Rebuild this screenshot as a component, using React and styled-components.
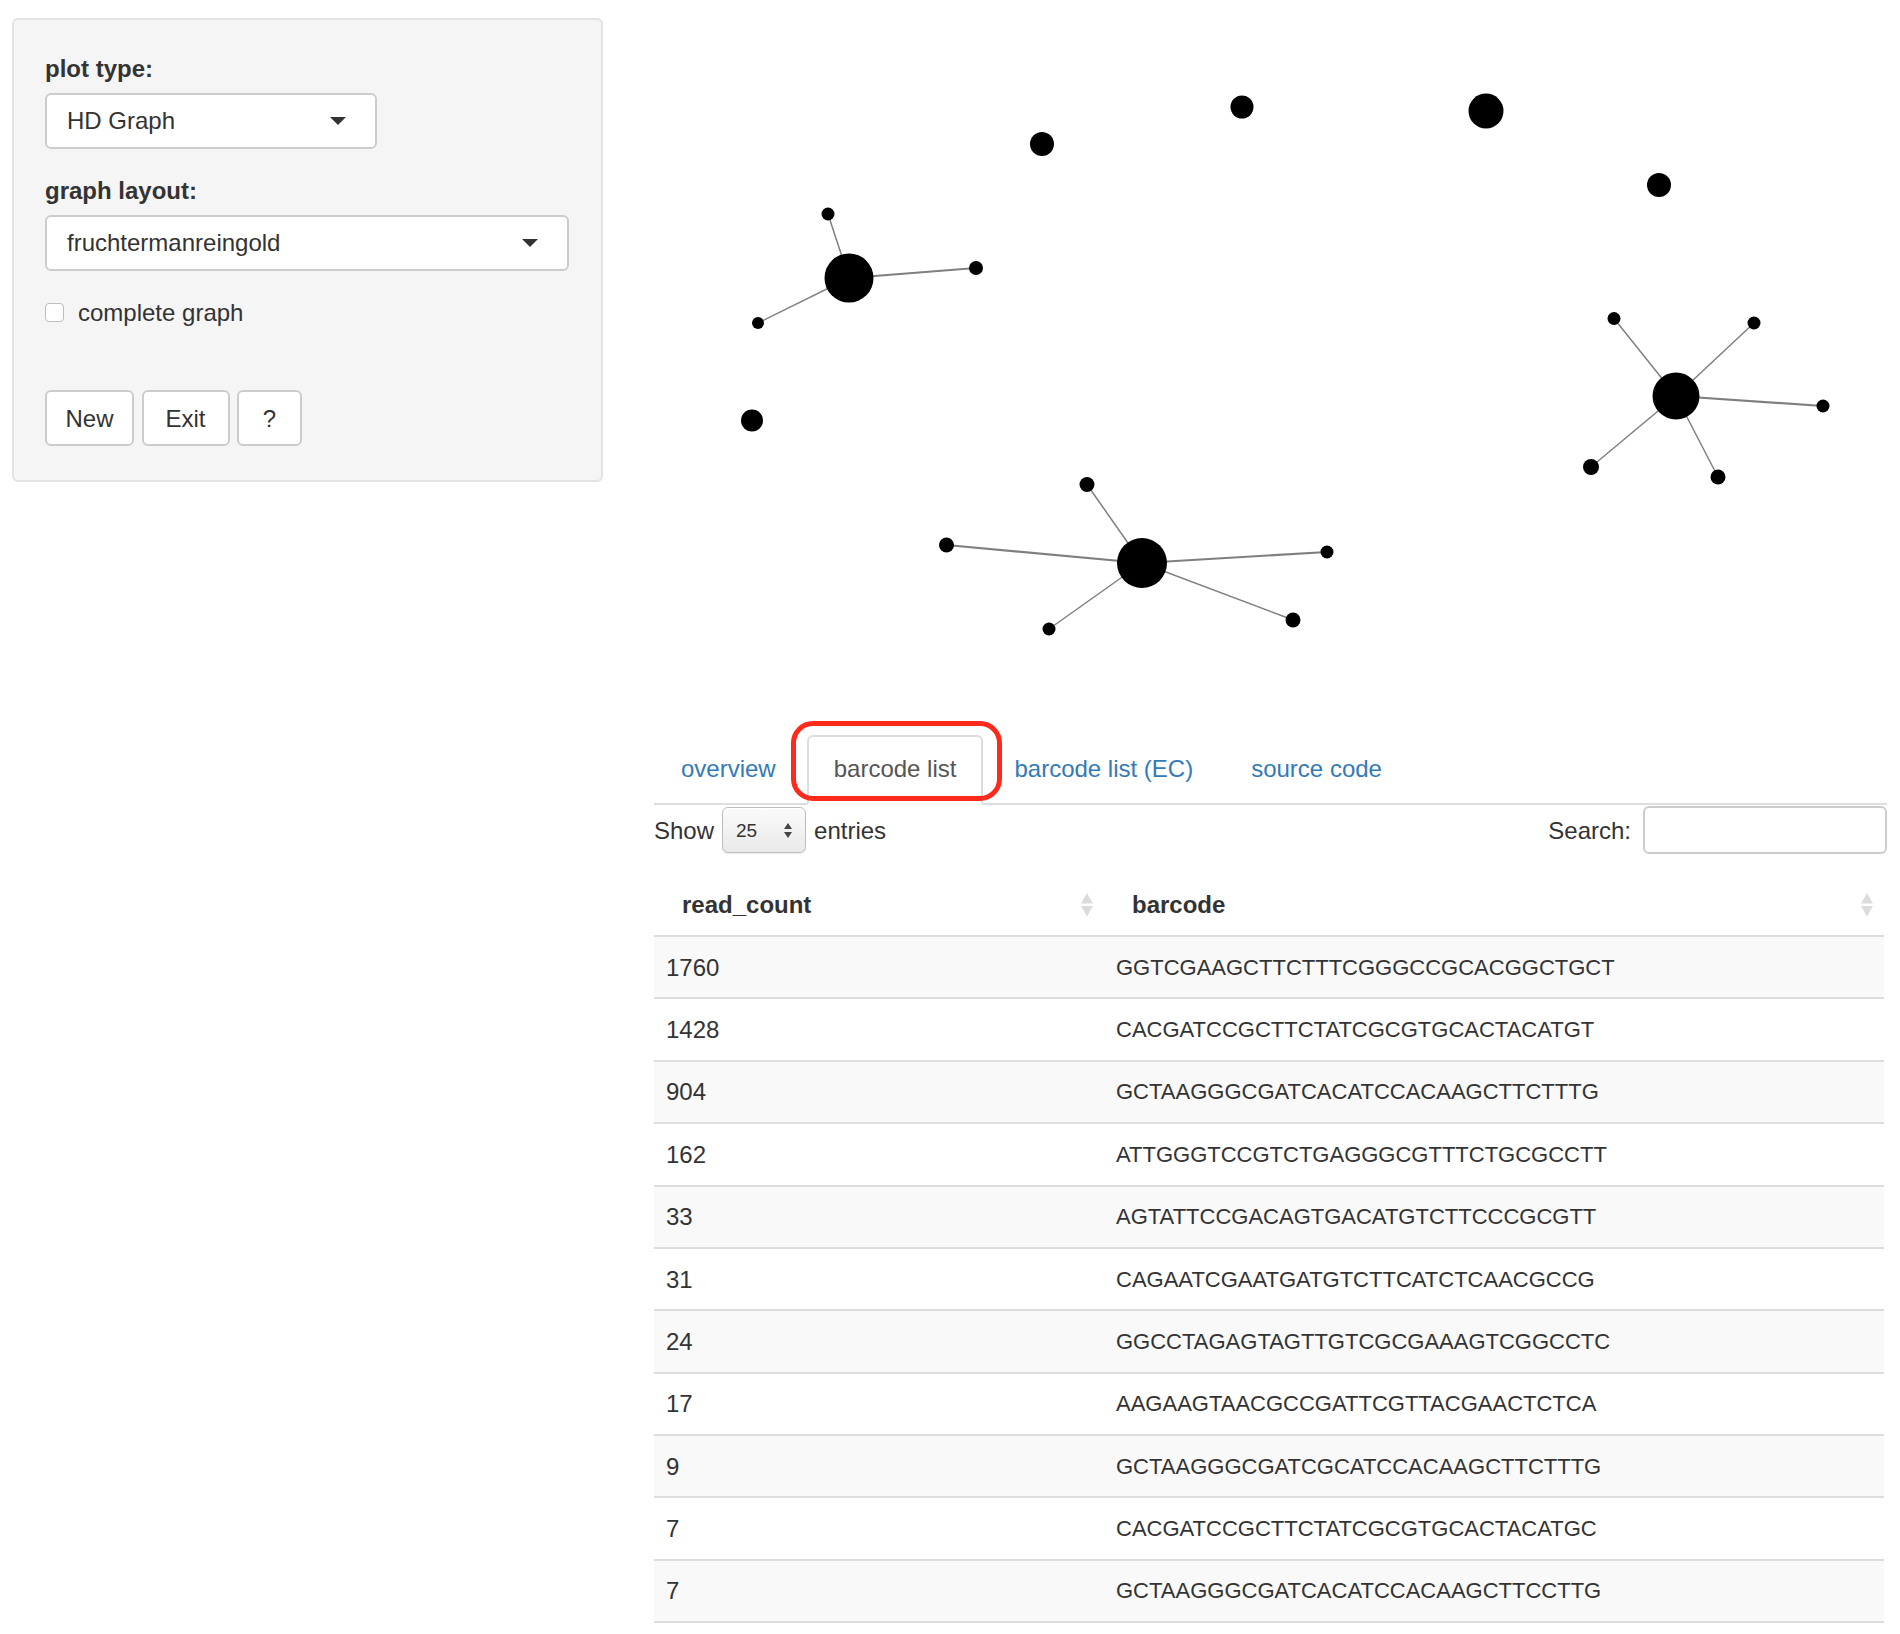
import React from "react";
import styled, { createGlobalStyle } from "styled-components";

const GlobalStyle = createGlobalStyle`
  html, body { margin: 0; padding: 0; background: #fff; }
  body {
    font-family: "Liberation Sans", Arial, Helvetica, sans-serif;
    font-size: 24px;
    line-height: 33px;
    color: #333;
  }
  * { box-sizing: border-box; }
`;

const Page = styled.div`
  display: flex;
  align-items: flex-start;
  gap: 51px;
  width: 1900px;
  padding: 18px 13px 0 12px;
`;

const Sidebar = styled.aside`
  flex: 0 0 591px;
  background: #f5f5f5;
  border: 2px solid #e3e3e3;
  border-radius: 6px;
  padding: 31.5px 31px 34px;
`;

const FormGroup = styled.div`
  margin-bottom: 25px;
`;

const Label = styled.div`
  font-weight: bold;
  margin-bottom: 8px;
`;

const Select = styled.div`
  display: flex;
  align-items: center;
  justify-content: space-between;
  width: ${(p) => p.$w}px;
  height: 56px;
  padding: 0 29px 0 20px;
  background: #fff;
  border: 2px solid #ccc;
  border-radius: 6px;
`;

const Caret = styled.span`
  width: 0;
  height: 0;
  border-left: 8px solid transparent;
  border-right: 8px solid transparent;
  border-top: 8px solid #333;
`;

const CheckRow = styled.label`
  display: flex;
  align-items: center;
  gap: 14px;
`;

const CheckBox = styled.span`
  width: 19px;
  height: 19px;
  background: #fff;
  border: 1.5px solid #bdbdbd;
  border-radius: 4px;
`;

const ButtonRow = styled.div`
  display: flex;
  gap: 7.5px;
  margin-top: 61.5px;
`;

const Button = styled.button`
  width: ${(p) => p.$w}px;
  height: 56px;
  padding: 0;
  font: inherit;
  color: #333;
  background: #fff;
  border: 2px solid #ccc;
  border-radius: 6px;
`;

const Main = styled.main`
  flex: 0 0 1233px;
  display: flex;
  flex-direction: column;
`;

const Plot = styled.svg`
  display: block;
  width: 1233px;
  height: 717px;
`;

const Tabs = styled.ul`
  display: flex;
  margin: 0;
  padding: 0;
  list-style: none;
  border-bottom: 2px solid #ddd;
`;

const TabItem = styled.li`
  position: relative;
  margin: 0 4px -2px 0;
`;

const TabLink = styled.a`
  display: block;
  padding: 14.5px 25px 18.5px;
  font-size: 24px;
  line-height: 33px;
  text-decoration: none;
  color: ${(p) => (p.$active ? "#555" : "#337ab7")};
  background: ${(p) => (p.$active ? "#fff" : "transparent")};
  border: 2px solid ${(p) => (p.$active ? "#ddd" : "transparent")};
  border-bottom-color: ${(p) => (p.$active ? "#fff" : "transparent")};
  border-radius: 6px 6px 0 0;
`;

const Highlight = styled.span`
  position: absolute;
  left: -16px;
  right: -19px;
  top: -14px;
  height: 80px;
  border: 5px solid #fe2b1c;
  border-radius: 22px;
  pointer-events: none;
`;

const Controls = styled.div`
  display: flex;
  align-items: center;
  justify-content: space-between;
  height: 48px;
  margin-top: 1px;
`;

const Inline = styled.div`
  display: flex;
  align-items: center;
`;

const LengthSelect = styled.div`
  display: flex;
  align-items: center;
  justify-content: space-between;
  width: 84px;
  height: 46px;
  margin: 0 8px;
  padding: 0 13px 0 13px;
  font-size: 19px;
  color: #333;
  background: linear-gradient(#fbfbfb, #e9e9e9);
  border: 1.5px solid #bdbdbd;
  border-radius: 6px;
  box-shadow: inset 0 1px 0 #fff, 0 1px 1px rgba(0, 0, 0, 0.08);
`;

const SearchInput = styled.input`
  width: 244px;
  height: 48px;
  margin-left: 12px;
  border: 2px solid #ccc;
  border-radius: 6px;
  background: #fff;
`;

const Table = styled.table`
  width: 1230px;
  margin-top: 15px;
  border-collapse: separate;
  border-spacing: 0;
  table-layout: fixed;
`;

const Th = styled.th`
  padding: 19px 11px 14px 28px;
  text-align: left;
  font-weight: bold;
  border-bottom: 2px solid #ddd;
`;

const ThInner = styled.div`
  display: flex;
  align-items: center;
  justify-content: space-between;
`;

const Row = styled.tr`
  background: ${(p) => (p.$striped ? "#f9f9f9" : "#fff")};
`;

const Td = styled.td`
  padding: 13.7px 12px;
  border-bottom: 2px solid #ddd;
  font-size: ${(p) => (p.$seq ? "22px" : "24px")};
  white-space: nowrap;
`;

const SortIcon = () => (
  <svg width="12" height="24" viewBox="0 0 12 24">
    <polygon points="6,0 12,10.5 0,10.5" fill="#dcdcdc" />
    <polygon points="0,13 12,13 6,23.5" fill="#dcdcdc" />
  </svg>
);

const UpDown = () => (
  <svg width="8" height="15" viewBox="0 0 8 15">
    <polygon points="4,0 8,6 0,6" fill="#444" />
    <polygon points="0,9 8,9 4,15" fill="#444" />
  </svg>
);

const hubs = [
  {
    x: 195, y: 260, r: 24.5,
    leaves: [
      { x: 174, y: 196, r: 6.5, w: 1.5 },
      { x: 322, y: 250, r: 7, w: 2.2 },
      { x: 104, y: 305, r: 6, w: 1.5 },
    ],
  },
  {
    x: 1022, y: 378, r: 23.5,
    leaves: [
      { x: 960, y: 300.5, r: 6.5, w: 1.5 },
      { x: 1100, y: 305, r: 6.5, w: 1.5 },
      { x: 1169, y: 388, r: 6.5, w: 2.2 },
      { x: 937, y: 449, r: 8, w: 1.5 },
      { x: 1064, y: 459, r: 7.5, w: 1.5 },
    ],
  },
  {
    x: 488, y: 545, r: 25,
    leaves: [
      { x: 433, y: 466.5, r: 7.5, w: 1.5 },
      { x: 292.5, y: 527, r: 7.5, w: 2.2 },
      { x: 673, y: 534, r: 6.5, w: 2.2 },
      { x: 395, y: 611, r: 6.5, w: 1.5 },
      { x: 639, y: 602, r: 7.5, w: 1.5 },
    ],
  },
];

const singles = [
  { x: 388, y: 126, r: 12 },
  { x: 588, y: 89, r: 11.5 },
  { x: 832, y: 93, r: 17.5 },
  { x: 1005, y: 167, r: 12 },
  { x: 98, y: 402.5, r: 11 },
];

const rows = [
  ["1760", "GGTCGAAGCTTCTTTCGGGCCGCACGGCTGCT"],
  ["1428", "CACGATCCGCTTCTATCGCGTGCACTACATGT"],
  ["904", "GCTAAGGGCGATCACATCCACAAGCTTCTTTG"],
  ["162", "ATTGGGTCCGTCTGAGGGCGTTTCTGCGCCTT"],
  ["33", "AGTATTCCGACAGTGACATGTCTTCCCGCGTT"],
  ["31", "CAGAATCGAATGATGTCTTCATCTCAACGCCG"],
  ["24", "GGCCTAGAGTAGTTGTCGCGAAAGTCGGCCTC"],
  ["17", "AAGAAGTAACGCCGATTCGTTACGAACTCTCA"],
  ["9", "GCTAAGGGCGATCGCATCCACAAGCTTCTTTG"],
  ["7", "CACGATCCGCTTCTATCGCGTGCACTACATGC"],
  ["7", "GCTAAGGGCGATCACATCCACAAGCTTCCTTG"],
];

const tabs = ["overview", "barcode list", "barcode list (EC)", "source code"];

export default function App() {
  return (
    <>
      <GlobalStyle />
      <Page>
        <Sidebar>
          <FormGroup>
            <Label>plot type:</Label>
            <Select $w={332}>
              <span>HD Graph</span>
              <Caret />
            </Select>
          </FormGroup>
          <FormGroup>
            <Label>graph layout:</Label>
            <Select $w={524}>
              <span>fruchtermanreingold</span>
              <Caret />
            </Select>
          </FormGroup>
          <CheckRow>
            <CheckBox />
            <span>complete graph</span>
          </CheckRow>
          <ButtonRow>
            <Button $w={89}>New</Button>
            <Button $w={88}>Exit</Button>
            <Button $w={65}>?</Button>
          </ButtonRow>
        </Sidebar>

        <Main>
          <Plot viewBox="0 0 1233 717">
            {hubs.map((h, i) =>
              h.leaves.map((l, j) => (
                <line
                  key={`e${i}-${j}`}
                  x1={h.x}
                  y1={h.y}
                  x2={l.x}
                  y2={l.y}
                  stroke="#7f7f7f"
                  strokeWidth={l.w}
                />
              ))
            )}
            {hubs.map((h, i) => (
              <g key={`h${i}`}>
                <circle cx={h.x} cy={h.y} r={h.r} fill="#000" />
                {h.leaves.map((l, j) => (
                  <circle key={j} cx={l.x} cy={l.y} r={l.r} fill="#000" />
                ))}
              </g>
            ))}
            {singles.map((n, i) => (
              <circle key={`s${i}`} cx={n.x} cy={n.y} r={n.r} fill="#000" />
            ))}
          </Plot>

          <Tabs>
            {tabs.map((t) => {
              const active = t === "barcode list";
              return (
                <TabItem key={t}>
                  <TabLink $active={active}>{t}</TabLink>
                  {active && <Highlight />}
                </TabItem>
              );
            })}
          </Tabs>

          <Controls>
            <Inline>
              <span>Show</span>
              <LengthSelect>
                <span>25</span>
                <UpDown />
              </LengthSelect>
              <span>entries</span>
            </Inline>
            <Inline>
              <span>Search:</span>
              <SearchInput type="text" />
            </Inline>
          </Controls>

          <Table>
            <colgroup>
              <col style={{ width: "450px" }} />
              <col />
            </colgroup>
            <thead>
              <tr>
                <Th>
                  <ThInner>
                    <span>read_count</span>
                    <SortIcon />
                  </ThInner>
                </Th>
                <Th>
                  <ThInner>
                    <span>barcode</span>
                    <SortIcon />
                  </ThInner>
                </Th>
              </tr>
            </thead>
            <tbody>
              {rows.map(([count, seq], i) => (
                <Row key={i} $striped={i % 2 === 0}>
                  <Td>{count}</Td>
                  <Td $seq>{seq}</Td>
                </Row>
              ))}
            </tbody>
          </Table>
        </Main>
      </Page>
    </>
  );
}
